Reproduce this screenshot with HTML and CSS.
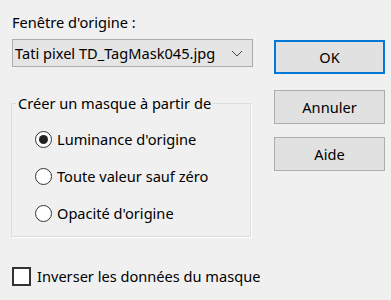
FILE: index.html
```html
<!DOCTYPE html>
<html lang="fr">
<head>
  <meta charset="UTF-8">
  <title>Nouveau masque</title>
  <link rel="stylesheet" href="styles.css">
</head>
<body>
  <div class="dialog">
    <!-- Colonne gauche : options -->
    <div class="main">
      <div class="label">Fenêtre d'origine :</div>
      <div class="combo">
        <span>Tati pixel TD_TagMask045.jpg</span>
        <svg class="chevron" width="12" height="7" viewBox="0 0 12 7">
          <path d="M1 1 L6 6 L11 1" fill="none" stroke="#444" stroke-width="1"/>
        </svg>
      </div>

      <fieldset class="group">
        <legend>Créer un masque à partir de</legend>
        <label class="radio"><span class="dot checked"></span>Luminance d'origine</label>
        <label class="radio"><span class="dot"></span>Toute valeur sauf zéro</label>
        <label class="radio"><span class="dot"></span>Opacité d'origine</label>
      </fieldset>

      <label class="check"><span class="box"></span>Inverser les données du masque</label>
    </div>

    <!-- Colonne droite : boutons -->
    <div class="buttons">
      <button class="btn default">OK</button>
      <button class="btn">Annuler</button>
      <button class="btn aide">Aide</button>
    </div>
  </div>
</body>
</html>
```

FILE: styles.css
```css
/* Fond de la boîte de dialogue */
body {
  margin: 0;
  background: #f0f0f0;
  font-family: "Noto Sans", "Open Sans", sans-serif;
  font-size: 14.6px;
  color: #000;
}

.dialog {
  display: flex;
  padding: 12px 0 0 12px;
}

.main {
  width: 240px;
}

.label {
  line-height: 20px;
  height: 20px;
  margin-bottom: 7px;
}

/* Liste déroulante */
.combo {
  box-sizing: border-box;
  height: 28px;
  width: 241px;
  border: 1px solid #adadad;
  background: #e5e5e5;
  display: flex;
  align-items: center;
  justify-content: space-between;
  padding: 0 9px 0 2px;
  line-height: 20px;
}

.chevron {
  margin-top: 1px;
}

/* Cadre de groupe */
.group {
  box-sizing: border-box;
  width: 240px;
  height: 144px;
  margin: 26px 0 0 -1px;
  padding: 16px 0 0 0;
  border: 1px solid #dcdcdc;
  box-shadow: 1px 1px 0 #fff;
}

.group legend {
  padding: 0 2px;
  margin-left: 4px;
  line-height: 20px;
}

.radio {
  display: flex;
  align-items: center;
  height: 20px;
  margin: 0 0 17px 23px;
  white-space: nowrap;
}

.dot {
  box-sizing: border-box;
  width: 17px;
  height: 17px;
  border: 1px solid #333;
  border-radius: 50%;
  background: #fff;
  margin-right: 5px;
  display: flex;
  align-items: center;
  justify-content: center;
}

.dot.checked::after {
  content: "";
  width: 9px;
  height: 9px;
  border-radius: 50%;
  background: #222;
}

/* Case à cocher */
.check {
  display: flex;
  align-items: center;
  height: 20px;
  margin-top: 29px;
  white-space: nowrap;
}

.box {
  box-sizing: border-box;
  width: 19px;
  height: 19px;
  border: 2px solid #333;
  background: #fff;
  margin-right: 6px;
  flex: none;
}

/* Boutons */
.buttons {
  display: flex;
  flex-direction: column;
  margin-left: 22px;
  padding-top: 28px;
}

.btn {
  box-sizing: border-box;
  width: 111px;
  height: 34px;
  border: 1px solid #adadad;
  background: #e1e1e1;
  font-family: inherit;
  font-size: 14.6px;
  color: #000;
  margin-bottom: 16px;
  padding: 0;
}

.btn.default {
  border: 2px solid #0078d7;
}

.btn.aide {
  margin-top: -3px;
}
```
